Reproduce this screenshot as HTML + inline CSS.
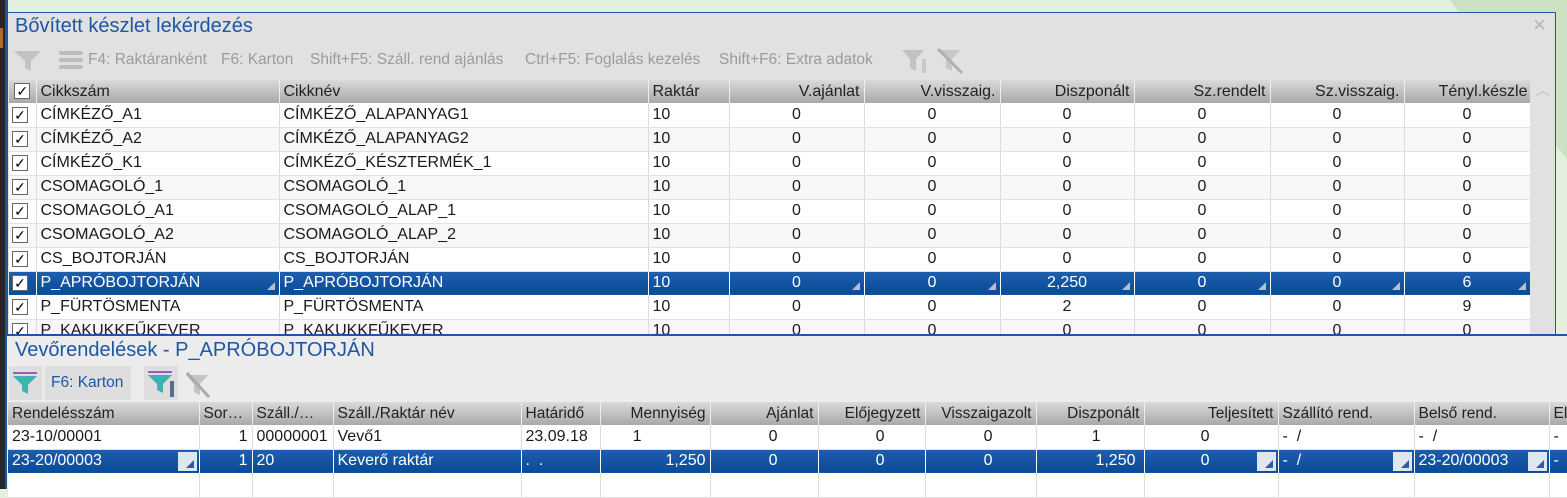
<!DOCTYPE html>
<html><head><meta charset="utf-8">
<style>
*{margin:0;padding:0;box-sizing:border-box}
body{width:1567px;height:489px;overflow:hidden;position:relative;background:#e4f0de;font-family:"Liberation Sans",Arial,sans-serif;font-size:16px;color:#1a1a1a}
.abs{position:absolute}
table{border-collapse:collapse;table-layout:fixed;position:absolute}
td,th{height:24px;border-right:1px solid #dcdcdc;border-bottom:1px solid #e2e2e2;white-space:nowrap;overflow:hidden;padding:0 4px;font-weight:normal;position:relative}
th{height:23px;background:linear-gradient(#dadada,#a9a9a9);border-right:1px solid #eee;border-bottom:none;color:#222}
tr:nth-child(odd) td{background:#f7f7f7}
tr:nth-child(even) td{background:#fff}
tr.sel td{background:linear-gradient(#1d5fae,#0a4a97)!important;color:#fff;border-right:1px solid #fff;border-bottom:1px solid #fff}
.c{text-align:center}.r{text-align:right}
.ck{display:inline-block;width:16px;height:16px;background:#fff;border:1px solid #666;font-size:14px;line-height:14px;text-align:center;color:#000;vertical-align:middle}
.tri{position:absolute;right:4px;bottom:5px;width:0;height:0;border-left:8px solid transparent;border-bottom:8px solid #b8bec8}
.box{position:absolute;right:2px;top:2px;width:19px;height:19px;background:#dfe6f0}
.box:after{content:"";position:absolute;right:3px;bottom:3px;border-left:8px solid transparent;border-bottom:8px solid #2a5fa8}
.tb{color:#9b9b9b;font-size:15.5px;top:51px}
.lo th{font-size:15.5px}
</style></head><body>
<div class="abs" style="left:0;top:0;width:5px;height:489px;background:#262626"></div>
<div class="abs" style="left:0;top:28px;width:3px;height:20px;background:#b06a2a"></div>
<div class="abs" style="left:5px;top:0;width:3px;height:489px;background:#1d56a3"></div>
<svg class="abs" style="left:1440px;top:0" width="127" height="334"><polygon points="10,0 127,0 127,160" fill="#cbe3c2"/></svg>
<div class="abs" style="left:7px;top:12px;width:1549px;height:330px;background:#e1e1e1;border:1px solid #1d56a3;border-bottom:none"></div>
<div class="abs" style="left:15px;top:15px;font-size:20px;color:#1d56a3">Bővített készlet lekérdezés</div>
<div class="abs" style="left:1533px;top:12px;font-size:22px;color:#b5b5b5">×</div>
<svg class="abs" style="left:14px;top:50px" width="70" height="22"><path d="M0 1h27l-10 10v10l-6-3v-7z" fill="#c2c2c2"/><rect x="45" y="1" width="24" height="4" rx="2" fill="#bdbdbd"/><rect x="45" y="8" width="24" height="4" rx="2" fill="#bdbdbd"/><rect x="45" y="15" width="24" height="4" rx="2" fill="#bdbdbd"/></svg>
<div class="abs tb" style="left:88px">F4: Raktáranként</div>
<div class="abs tb" style="left:221px">F6: Karton</div>
<div class="abs tb" style="left:310px">Shift+F5: Száll. rend ajánlás</div>
<div class="abs tb" style="left:525px">Ctrl+F5: Foglalás kezelés</div>
<div class="abs tb" style="left:719px">Shift+F6: Extra adatok</div>
<svg class="abs" style="left:900px;top:47px" width="66" height="28"><path d="M2 3h22l-8 9v12l-6-3v-9z" fill="#c2c2c2"/><rect x="22" y="12" width="4" height="14" fill="#c8c8c8"/><path d="M38 3h22l-8 9v12l-6-3v-9z" fill="#c8c8c8"/><path d="M38 2l24 24" stroke="#b0b0b0" stroke-width="3"/></svg>
<div class="abs" style="left:1536px;top:80px;font-size:14px;color:#bbb">︿</div>
<div class="abs" style="left:9px;top:80px;width:1521px;height:254px;overflow:hidden">
<table style="left:0;top:0;width:1521px">
<colgroup><col style="width:27px"><col style="width:243px"><col style="width:369px"><col style="width:81px"><col style="width:135px"><col style="width:136px"><col style="width:134px"><col style="width:136px"><col style="width:134px"><col style="width:126px"></colgroup>
<tr><th style="padding:0 3px"><span class="ck">✓</span></th><th style="text-align:left">Cikkszám</th><th style="text-align:left">Cikknév</th><th style="text-align:left">Raktár</th><th class="r">V.ajánlat</th><th class="r">V.visszaig.</th><th class="r">Diszponált</th><th class="r">Sz.rendelt</th><th class="r">Sz.visszaig.</th><th class="r" style="padding-right:2px">Tényl.készle</th></tr>
<tr><td style="padding:0 3px"><span class="ck">✓</span></td><td>CÍMKÉZŐ_A1</td><td>CÍMKÉZŐ_ALAPANYAG1</td><td>10</td><td class="c">0</td><td class="c">0</td><td class="c">0</td><td class="c">0</td><td class="c">0</td><td class="c">0</td></tr>
<tr><td style="padding:0 3px"><span class="ck">✓</span></td><td>CÍMKÉZŐ_A2</td><td>CÍMKÉZŐ_ALAPANYAG2</td><td>10</td><td class="c">0</td><td class="c">0</td><td class="c">0</td><td class="c">0</td><td class="c">0</td><td class="c">0</td></tr>
<tr><td style="padding:0 3px"><span class="ck">✓</span></td><td>CÍMKÉZŐ_K1</td><td>CÍMKÉZŐ_KÉSZTERMÉK_1</td><td>10</td><td class="c">0</td><td class="c">0</td><td class="c">0</td><td class="c">0</td><td class="c">0</td><td class="c">0</td></tr>
<tr><td style="padding:0 3px"><span class="ck">✓</span></td><td>CSOMAGOLÓ_1</td><td>CSOMAGOLÓ_1</td><td>10</td><td class="c">0</td><td class="c">0</td><td class="c">0</td><td class="c">0</td><td class="c">0</td><td class="c">0</td></tr>
<tr><td style="padding:0 3px"><span class="ck">✓</span></td><td>CSOMAGOLÓ_A1</td><td>CSOMAGOLÓ_ALAP_1</td><td>10</td><td class="c">0</td><td class="c">0</td><td class="c">0</td><td class="c">0</td><td class="c">0</td><td class="c">0</td></tr>
<tr><td style="padding:0 3px"><span class="ck">✓</span></td><td>CSOMAGOLÓ_A2</td><td>CSOMAGOLÓ_ALAP_2</td><td>10</td><td class="c">0</td><td class="c">0</td><td class="c">0</td><td class="c">0</td><td class="c">0</td><td class="c">0</td></tr>
<tr><td style="padding:0 3px"><span class="ck">✓</span></td><td>CS_BOJTORJÁN</td><td>CS_BOJTORJÁN</td><td>10</td><td class="c">0</td><td class="c">0</td><td class="c">0</td><td class="c">0</td><td class="c">0</td><td class="c">0</td></tr>
<tr class="sel"><td style="padding:0 3px"><span class="ck">✓</span></td><td>P_APRÓBOJTORJÁN<span class="tri"></span></td><td>P_APRÓBOJTORJÁN</td><td>10</td><td class="c">0<span class="tri"></span></td><td class="c">0<span class="tri"></span></td><td class="c">2,250<span class="tri"></span></td><td class="c">0<span class="tri"></span></td><td class="c">0<span class="tri"></span></td><td class="c">6<span class="tri"></span></td></tr>
<tr><td style="padding:0 3px"><span class="ck">✓</span></td><td>P_FÜRTÖSMENTA</td><td>P_FÜRTÖSMENTA</td><td>10</td><td class="c">0</td><td class="c">0</td><td class="c">2</td><td class="c">0</td><td class="c">0</td><td class="c">9</td></tr>
<tr><td style="padding:0 3px"><span class="ck">✓</span></td><td>P_KAKUKKFŰKEVER</td><td>P_KAKUKKFŰKEVER</td><td>10</td><td class="c">0</td><td class="c">0</td><td class="c">0</td><td class="c">0</td><td class="c">0</td><td class="c">0</td></tr>
</table></div>
<div class="abs" style="left:7px;top:334px;width:1560px;height:155px;background:#ececec;border-top:2px solid #1d56a3"></div>
<div class="abs" style="left:15px;top:339px;font-size:20px;color:#1d56a3">Vevőrendelések - P_APRÓBOJTORJÁN</div>
<div class="abs" style="left:9px;top:366px;width:33px;height:34px;background:#dedede"></div>
<svg class="abs" style="left:13px;top:372px" width="26" height="24"><rect x="0" y="0" width="24" height="2" fill="#9b59c6"/><path d="M0 4h24l-9 9v9l-6-3v-6z" fill="#3fb2b2"/></svg>
<div class="abs" style="left:45px;top:366px;width:86px;height:34px;background:#dedede;color:#1d56a3;font-size:15.5px;line-height:34px;padding-left:6px">F6: Karton</div>
<div class="abs" style="left:144px;top:366px;width:34px;height:34px;background:#dedede"></div>
<svg class="abs" style="left:147px;top:371px" width="66" height="28"><rect x="1" y="0" width="24" height="2" fill="#9b59c6"/><path d="M1 4h24l-9 9v9l-6-3v-6z" fill="#3fb2b2"/><rect x="23" y="10" width="4" height="16" fill="#5a6a8a"/><path d="M39 4h22l-8 9v11l-6-3v-8z" fill="#c4c4c4"/><path d="M40 2l22 24" stroke="#aaa" stroke-width="3"/></svg>
<table class="lo" style="left:8px;top:402px;width:1600px">
<colgroup><col style="width:191px"><col style="width:53px"><col style="width:81px"><col style="width:188px"><col style="width:79px"><col style="width:110px"><col style="width:108px"><col style="width:107px"><col style="width:111px"><col style="width:108px"><col style="width:134px"><col style="width:136px"><col style="width:135px"><col style="width:59px"></colgroup>
<tr><th style="text-align:left">Rendelésszám</th><th style="text-align:left">Sor…</th><th style="text-align:left">Száll./…</th><th style="text-align:left">Száll./Raktár név</th><th style="text-align:left">Határidő</th><th class="r">Mennyiség</th><th class="r">Ajánlat</th><th class="r">Előjegyzett</th><th class="r">Visszaigazolt</th><th class="r">Diszponált</th><th class="r">Teljesített</th><th style="text-align:left">Szállító rend.</th><th style="text-align:left">Belső rend.</th><th style="text-align:left">El</th></tr>
<tr><td>23-10/00001</td><td class="r">1</td><td>00000001</td><td>Vevő1</td><td>23.09.18</td><td class="r" style="padding-right:68px">1</td><td class="r" style="padding-right:40px">0</td><td class="r" style="padding-right:40px">0</td><td class="r" style="padding-right:43px">0</td><td class="r" style="padding-right:43px">1</td><td class="r" style="padding-right:68px">0</td><td>-&nbsp; /</td><td>-&nbsp; /</td><td>-</td></tr>
<tr class="sel"><td>23-20/00003<span class="box"></span></td><td class="r">1</td><td>20</td><td>Keverő raktár</td><td>.&nbsp; .</td><td class="r">1,250</td><td class="r" style="padding-right:40px">0</td><td class="r" style="padding-right:40px">0</td><td class="r" style="padding-right:43px">0</td><td class="r" style="padding-right:8px">1,250</td><td class="r" style="padding-right:68px">0<span class="box"></span></td><td>-&nbsp; /<span class="box"></span></td><td>23-20/00003<span class="box"></span></td><td>-</td></tr>
<tr><td style="background:#fff"></td><td style="background:#fff"></td><td style="background:#fff"></td><td style="background:#fff"></td><td style="background:#fff"></td><td style="background:#fff"></td><td style="background:#fff"></td><td style="background:#fff"></td><td style="background:#fff"></td><td style="background:#fff"></td><td style="background:#fff"></td><td style="background:#fff"></td><td style="background:#fff"></td><td style="background:#fff"></td></tr>
</table>
</body></html>
